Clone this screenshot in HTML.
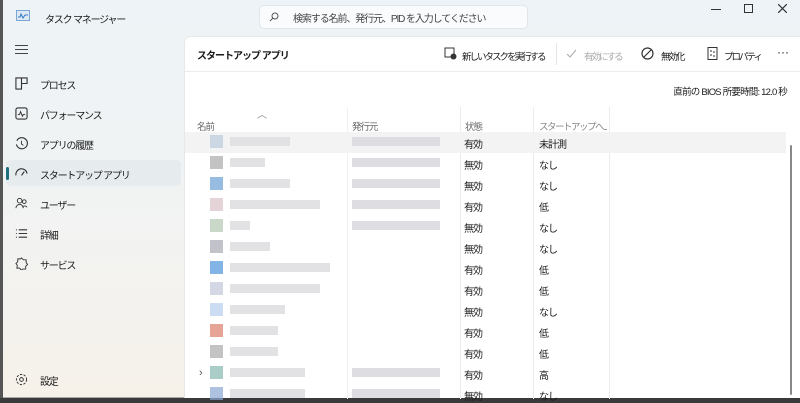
<!DOCTYPE html>
<html><head><meta charset="utf-8"><style>
*{margin:0;padding:0;box-sizing:border-box}
body{width:800px;height:401px;overflow:hidden;font-family:"Liberation Sans","Noto Sans CJK JP",sans-serif;font-size:11px;color:#1a1a1a;position:relative;background:#3a3a3a}
#win{position:absolute;left:0;top:0;width:800px;height:398px;background:linear-gradient(180deg,#edf3f7 0%,#f1f3f3 50%,#f6f2ea 100%);border-bottom:1px solid #aaa}
.a{position:absolute;white-space:nowrap}
#main{position:absolute;left:184px;top:36px;width:616px;height:362px;background:#fff;border-top-left-radius:7px;border-left:1px solid #e8e8e8;border-top:1px solid #e8e8e8}
.nav{position:absolute;left:40px;font-size:10px;letter-spacing:-1.2px}
.ic{position:absolute;left:15px;width:13px;height:13px}
.row{position:absolute;left:0;width:600px;height:21px}
.tb{font-size:9.5px;letter-spacing:-2px;top:12px}
</style></head><body>
<div id="win">
<div class="a" style="left:0;top:0;width:3px;height:398px;background:#555"></div>
<svg class="a" style="left:16px;top:10px" width="14" height="11"><rect x="0.5" y="0.5" width="13" height="10" fill="#dfe9f5" stroke="#7aa6d6"/><path d="M2 7 L4 7 L5 4 L7 8 L9 5 L12 5" stroke="#2f79c9" fill="none"/></svg>
<div class="a" style="left:45px;top:11px;font-size:10px;letter-spacing:-1.2px">タスク マネージャー</div>
<div class="a" style="left:259px;top:5px;width:269px;height:24px;background:#f9fbfc;border:1px solid #e0e6ea;border-radius:5px"></div>
<svg class="a" style="left:269px;top:12px" width="10" height="10"><circle cx="6" cy="4" r="3" fill="none" stroke="#555"/><path d="M4 6L1 9" stroke="#555"/></svg>
<div class="a" style="left:293px;top:10px;font-size:10px;letter-spacing:-1.1px;color:#444">検索する名前、発行元、PID を入力してください</div>
<div class="a" style="left:711px;top:9px;width:10px;height:1px;background:#333"></div>
<div class="a" style="left:744px;top:4px;width:9px;height:9px;border:1.2px solid #333"></div>
<svg class="a" style="left:778px;top:4px" width="9" height="9"><path d="M0 0L9 9M9 0L0 9" stroke="#333" stroke-width="1.2"/></svg>
<div class="a" style="left:15px;top:45px;width:13px;height:9px;border-top:1.2px solid #444;border-bottom:1.2px solid #444"></div>
<div class="a" style="left:15px;top:49px;width:13px;height:1.2px;background:#444"></div>

<svg class="ic" style="top:77px" viewBox="0 0 14 14"><path d="M1 1h6v12H1zM7 1h6v6H7" fill="none" stroke="#333" stroke-width="1.2"/></svg>
<div class="nav" style="top:77px">プロセス</div>
<svg class="ic" style="top:107px" viewBox="0 0 14 14"><rect x="1" y="1" width="12" height="12" rx="2" fill="none" stroke="#333" stroke-width="1.2"/><path d="M3 8h2l1-3 2 5 1-2h2" fill="none" stroke="#333"/></svg>
<div class="nav" style="top:107px">パフォーマンス</div>
<svg class="ic" style="top:137px" viewBox="0 0 14 14"><path d="M2 4A6 6 0 1 1 1.5 8" fill="none" stroke="#333" stroke-width="1.2"/><path d="M7 4v3.5l2 1.5" fill="none" stroke="#333"/></svg>
<div class="nav" style="top:137px">アプリの履歴</div>
<div class="a" style="left:6px;top:160px;width:175px;height:26px;background:#e6ebee;border-radius:4px"></div>
<div class="a" style="left:6px;top:167px;width:3px;height:13px;background:#1f6e80;border-radius:2px"></div>
<svg class="ic" style="top:167px" viewBox="0 0 14 14"><path d="M1 9A6 6 0 0 1 13 7M7 9l3-4" fill="none" stroke="#333" stroke-width="1.2"/></svg>
<div class="nav" style="top:167px">スタートアップ アプリ</div>
<svg class="ic" style="top:197px" viewBox="0 0 14 14"><circle cx="5" cy="4" r="2.5" fill="none" stroke="#333"/><circle cx="10" cy="5" r="2" fill="none" stroke="#333"/><path d="M1 12a4 4 0 0 1 8 0M8 11a3 3 0 0 1 5 0" fill="none" stroke="#333"/></svg>
<div class="nav" style="top:197px">ユーザー</div>
<svg class="ic" style="top:227px" viewBox="0 0 14 14"><path d="M1 3h1M1 7h1M1 11h1M4 3h9M4 7h9M4 11h9" stroke="#333" stroke-width="1.2"/></svg>
<div class="nav" style="top:227px">詳細</div>
<svg class="ic" style="top:257px" viewBox="0 0 14 14"><path d="M7 1l2 2 3 0 0 3 1.5 2-2 2 0 3-3 0-2 1-1.5-2-3 0 .5-3L1 7l2-2 0-3 3 0z" fill="none" stroke="#333"/></svg>
<div class="nav" style="top:257px">サービス</div>
<svg class="ic" style="top:373px" viewBox="0 0 14 14"><circle cx="7" cy="7" r="2" fill="none" stroke="#333"/><circle cx="7" cy="7" r="5.5" fill="none" stroke="#333" stroke-dasharray="2.5 1.5"/></svg>
<div class="nav" style="top:373px">設定</div>
</div>

<div id="main">
<div class="a" style="left:12px;top:10px;font-size:10px;letter-spacing:-1px;font-weight:bold">スタートアップ アプリ</div>
<div class="a" style="left:0;top:34px;width:616px;height:1px;background:#ececec"></div>
<svg class="a" style="left:259px;top:10px" width="13" height="13"><rect x="1" y="1" width="9" height="9" fill="none" stroke="#333"/><circle cx="9.5" cy="9.5" r="3" fill="#333"/></svg>
<div class="a tb" style="left:277px">新しいタスクを実行する</div>
<div class="a" style="left:371px;top:6px;width:1px;height:22px;background:#e5e5e5"></div>
<svg class="a" style="left:381px;top:12px" width="11" height="9"><path d="M1 5l3 3 6-7" fill="none" stroke="#aaa"/></svg>
<div class="a tb" style="left:399px;color:#aaa">有効にする</div>
<svg class="a" style="left:456px;top:10px" width="13" height="13"><circle cx="6.5" cy="6.5" r="5.5" fill="none" stroke="#333" stroke-width="1.2"/><path d="M3 10L10 3" stroke="#333" stroke-width="1.2"/></svg>
<div class="a tb" style="left:476px">無効化</div>
<svg class="a" style="left:522px;top:10px" width="11" height="13"><rect x="1" y="0.5" width="9" height="12" fill="none" stroke="#333"/><path d="M3 4h2M3 8h2M6 5h2M6 9h2" stroke="#333"/></svg>
<div class="a tb" style="left:539px">プロパティ</div>
<div class="a" style="left:592px;top:8px;font-size:12px;letter-spacing:0">···</div>
<div class="a" style="right:13px;top:47px;font-size:9.5px;letter-spacing:-0.8px">直前の BIOS 所要時間:  12.0 秒</div>
<div class="a" style="left:72px;top:69px;color:#888;font-size:10px">︿</div>
<div class="a" style="left:12px;top:82px;color:#666;font-size:9.5px;letter-spacing:-1px">名前</div>
<div class="a" style="left:167px;top:82px;color:#666;font-size:9.5px;letter-spacing:-1px">発行元</div>
<div class="a" style="left:280px;top:82px;color:#666;font-size:9.5px;letter-spacing:-1px">状態</div>
<div class="a" style="left:354px;top:82px;color:#888;font-size:9.5px;letter-spacing:-1.5px">スタートアップへ...</div>
<div class="a" style="left:162px;top:70px;width:1px;height:292px;background:#f0f0f0"></div>
<div class="a" style="left:275px;top:70px;width:1px;height:292px;background:#ececec"></div>
<div class="a" style="left:348px;top:70px;width:1px;height:292px;background:#ececec"></div>
<div class="a" style="left:424px;top:70px;width:1px;height:292px;background:#ececec"></div>
<div class="row" style="top:95px;background:#f3f3f3;width:601px"></div>
<div class="a" style="left:605px;top:108px;width:2px;height:250px;background:#888;border-radius:1px"></div>
<div class="a" style="left:14px;top:330px;color:#555">›</div>
</div>
<div id="rows"></div>
<script>
var st=["有効","無効","無効","有効","無効","無効","有効","有効","無効","有効","有効","有効","無効"];
var su=["未計測","なし","なし","低","なし","なし","低","低","なし","低","低","高","なし"];
var ic=["#b9ccdd","#aaa","#6b9fd6","#d9c0c6","#b2c8b0","#a8a8b4","#4d95dc","#c2c6d8","#b6cfee","#dc7d6a","#aaa","#88b8b0","#8aa7d4"];
var nw=[60,35,60,90,20,40,100,90,55,48,48,75,75];
var pub=[1,1,1,1,1,0,0,0,0,0,0,1,1];
var h="";
for(var i=0;i<13;i++){var y=131+i*21;
h+='<div class="a" style="left:210px;top:'+(y+4)+'px;width:13px;height:13px;background:'+ic[i]+';opacity:.7"></div>';
h+='<div class="a" style="left:230px;top:'+(y+6)+'px;width:'+nw[i]+'px;height:9px;background:#e2e2e4"></div>';
if(pub[i])h+='<div class="a" style="left:352px;top:'+(y+6)+'px;width:88px;height:9px;background:#dedee2"></div>';
h+='<div class="a" style="left:464px;top:'+(y+5)+'px;font-size:10px;letter-spacing:-1px">'+st[i]+'</div>';
h+='<div class="a" style="left:539px;top:'+(y+5)+'px;font-size:10px;letter-spacing:-1px">'+su[i]+'</div>';}
document.getElementById("rows").innerHTML=h;
</script>
</body></html>
